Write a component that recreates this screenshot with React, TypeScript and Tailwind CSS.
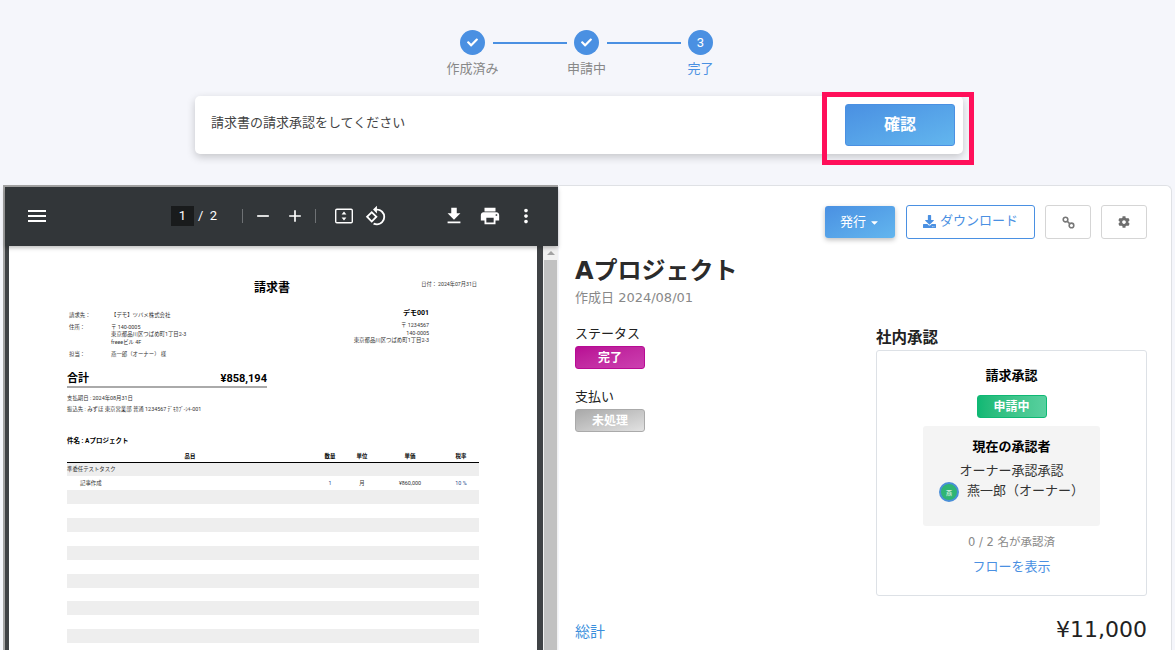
import { FaCheck, FaDownload, FaCog, FaCaretDown } from "react-icons/fa";
import { MdMenu, MdRemove, MdAdd, MdFileDownload, MdPrint, MdMoreVert, MdRotate90DegreesCcw } from "react-icons/md";

const rows = [0, 1, 2, 3, 4, 5, 6, 7, 8, 9, 10, 11, 12];

function StepCircle({ done, n }: { done?: boolean; n?: number }) {
  return (
    <div className="w-[25px] h-[25px] rounded-full bg-[#4a90e2] flex items-center justify-center text-white text-[13px] font-['Roboto',sans-serif] shrink-0">
      {done ? <FaCheck className="w-[11px] h-[11px]" /> : n}
    </div>
  );
}

function FitIcon() {
  return (
    <svg viewBox="0 0 20 20" className="w-5 h-5" fill="none">
      <rect x="1.7" y="3.2" width="16.6" height="13.6" rx="1.2" stroke="#fff" strokeWidth="1.4" />
      <path d="M10 5.6l2.4 3h-4.8zM10 14.4l-2.4-3h4.8z" fill="#fff" />
    </svg>
  );
}

function LinkIcon() {
  return (
    <svg viewBox="0 0 14 14" className="w-[13px] h-[13px]" fill="none" stroke="#777" strokeWidth="1.7">
      <circle cx="3.8" cy="3.8" r="2.5" />
      <circle cx="10.2" cy="10.2" r="2.5" />
      <path d="M5.8 5.8l2.4 2.4" />
    </svg>
  );
}

function Badge({ label, cls }: { label: string; cls: string }) {
  return (
    <div className={`w-[70px] h-[23px] rounded-[3px] border flex items-center justify-center text-white text-[12px] font-bold ${cls}`}>
      {label}
    </div>
  );
}

function PdfPage() {
  return (
    <div className="w-[528px] bg-white h-[420px] pl-[58px] text-[#333] overflow-hidden">
      <div className="h-[30px] flex w-[410px]">
        <div className="ml-[187px] mt-[33px] text-[12px] leading-[18px] font-bold text-black">請求書</div>
        <div className="ml-auto mt-[34px] text-[5.2px] leading-[8px]">日付： 2024年07月31日</div>
      </div>
      <div className="flex mt-[36px] pl-[2px] w-[362px] text-[5.4px] leading-[7.5px]">
        <div>
          <div className="flex">
            <div className="w-[42px]">請求先：</div>
            <div>【デモ】ツバメ株式会社</div>
          </div>
          <div className="flex mt-[4px]">
            <div className="w-[42px]">住所：</div>
            <div>
              <div>〒 140-0005</div>
              <div>東京都品川区つばめ町1丁目2-3</div>
              <div>freeeビル 4F</div>
            </div>
          </div>
          <div className="flex mt-[5px]">
            <div className="w-[42px]">担当：</div>
            <div>燕一郎（オーナー） 様</div>
          </div>
        </div>
        <div className="ml-auto text-right -mt-[4px]">
          <div className="text-[7px] leading-[10px] font-bold text-black mb-[4px]">デモ001</div>
          <div>〒 1234567</div>
          <div>140-0005</div>
          <div>東京都品川区つばめ町1丁目2-3</div>
        </div>
      </div>
      <div className="w-[200px] mt-[13px] flex justify-between items-end text-[11px] leading-[14px] font-bold text-black border-b-2 border-[#aaa]">
        <span>合計</span>
        <span>¥858,194</span>
      </div>
      <div className="text-[5.4px] leading-[8px] mt-[6px]">支払期日 : 2024年08月31日</div>
      <div className="text-[5.4px] leading-[8px] mt-[3px]">振込先 : みずほ 東京営業部 普通 1234567 ﾃﾞﾓｶﾌﾞ-ｼｷ-001</div>
      <div className="text-[6.5px] leading-[10px] font-bold text-black mt-[23px]">件名 : Aプロジェクト</div>
      <div className="w-[412px] mt-[5px] text-[5.4px]">
        <div className="grid grid-cols-[246px_34px_30px_66px_36px] h-[12px] items-center text-center font-bold border-b border-black text-black">
          <div>品目</div>
          <div>数量</div>
          <div>単位</div>
          <div>単価</div>
          <div>税率</div>
        </div>
        <div className="h-[13.9px] bg-[#eee] flex items-center">準委任テストタスク</div>
        <div className="h-[13.9px] grid grid-cols-[246px_34px_30px_66px_36px] items-center text-center">
          <div className="text-left pl-[13px]">記事作成</div>
          <div className="text-[#2a4a8a]">1</div>
          <div>月</div>
          <div>¥860,000</div>
          <div className="text-[#2a4a8a]">10 %</div>
        </div>
        {rows.map((r) => (
          <div key={r} className={r % 2 === 0 ? "h-[13.9px] bg-[#eee]" : "h-[13.9px]"} />
        ))}
      </div>
    </div>
  );
}

function PdfViewer() {
  return (
    <div className="w-[555px] shrink-0 border-l-2 border-t-2 border-[#a3a3a3] bg-[#3f4245] font-['Roboto','Noto_Sans_CJK_JP',sans-serif]">
      <div className="relative z-10 h-[59px] bg-[#323639] flex items-center pb-[2px] text-white shadow-[0_2px_4px_rgba(0,0,0,0.25)]">
        <MdMenu className="w-6 h-6 ml-[20px]" />
        <div className="w-[23px] h-5 bg-[#191b1c] ml-[122px] flex items-center justify-center text-[13px]">1</div>
        <div className="text-[13px] ml-[4px] w-[44px] whitespace-pre">/  2</div>
        <div className="w-px h-[14px] bg-[#6e7174]" />
        <MdRemove className="w-[20px] h-[20px] ml-[10px]" />
        <MdAdd className="w-[20px] h-[20px] ml-[12px]" />
        <div className="w-px h-[14px] bg-[#6e7174] ml-[10px]" />
        <div className="ml-[18px]"><FitIcon /></div>
        <MdRotate90DegreesCcw className="w-[22px] h-[22px] ml-[11px]" />
        <MdFileDownload className="w-[22px] h-[22px] ml-[56px]" />
        <MdPrint className="w-[22px] h-[22px] ml-[14px]" />
        <MdMoreVert className="w-[22px] h-[22px] ml-[14px]" />
      </div>
      <div className="flex pl-[4px]">
        <PdfPage />
        <div className="w-[6px]" />
        <div className="w-[15px] bg-[#f1f1f1] pl-[1px] pr-[1px]">
          <div className="h-[14px] flex items-center justify-center">
            <div className="w-0 h-0 border-l-[4px] border-r-[4px] border-b-[4px] border-l-transparent border-r-transparent border-b-[#a3a3a3]" />
          </div>
          <div className="h-[400px] bg-[#c1c1c1]" />
        </div>
      </div>
    </div>
  );
}

function DetailPanel() {
  return (
    <div className="flex-1 ml-px mr-[3px] bg-white border-t border-r border-[#dfe1e5] rounded-tr-[6px] pt-[19px] pl-[16px] pr-[24px]">
      <div className="flex justify-end items-start gap-[10px]">
        <button className="w-[70px] h-[32px] mt-[1px] mr-px rounded-[3px] bg-linear-to-br from-[#4a90e2] to-[#63b6ee] text-white text-[13px] flex items-center justify-center gap-[3px] shadow-[0_2px_5px_rgba(0,0,0,0.25)]">
          発行 <FaCaretDown className="w-[11px] h-[11px]" />
        </button>
        <button className="w-[129px] h-[34px] rounded-[3px] border border-[#4a90e2] text-[#4a90e2] text-[13px] flex items-center justify-center gap-[4px] pb-[2px]">
          <FaDownload className="w-[13px] h-[13px]" /> ダウンロード
        </button>
        <button className="w-[46px] h-[34px] rounded-[3px] border border-[#d5d5d5] flex items-center justify-center">
          <LinkIcon />
        </button>
        <button className="w-[46px] h-[34px] rounded-[3px] border border-[#d5d5d5] flex items-center justify-center text-[#6e6e6e]">
          <FaCog className="w-[12px] h-[12px]" />
        </button>
      </div>
      <h1 className="text-[24px] leading-[36px] font-bold text-[#2b2b2b] mt-[14px]">Aプロジェクト</h1>
      <div className="text-[13px] leading-[20px] text-[#888] -mt-[1px]">作成日 2024/08/01</div>
      <div className="flex mt-[16px]">
        <div className="w-[301px]">
          <div className="text-[13px] leading-[20px] text-[#222] mb-[2px]">ステータス</div>
          <Badge label="完了" cls="from-[#b80b94] to-[#cc3fb0] bg-linear-to-br border-[#b80b94]" />
          <div className="text-[13px] leading-[20px] text-[#222] mt-[18px] mb-[2px]">支払い</div>
          <Badge label="未処理" cls="from-[#a9a9a9] to-[#e2e2e2] bg-linear-to-br border-[#aaa]" />
        </div>
        <div className="w-[271px]">
          <div className="text-[15.5px] leading-[20px] font-bold text-[#222] mt-[4px] mb-[2px]">社内承認</div>
          <div className="h-[246px] border border-[#dde1e6] rounded-[3px] flex flex-col items-center pt-[15px]">
            <div className="text-[13px] leading-[20px] font-bold text-black">請求承認</div>
            <div className="mt-[9px]">
              <Badge label="申請中" cls="from-[#0fb874] to-[#58d09f] bg-linear-to-r border-[#0fb874]" />
            </div>
            <div className="w-[177px] h-[100px] mt-[8px] bg-[#f4f4f4] rounded-[3px] flex flex-col items-center pt-[11px] text-[13px]">
              <div className="leading-[20px] font-bold text-black">現在の承認者</div>
              <div className="leading-[20px] text-[#333] mt-[4px]">オーナー承認承認</div>
              <div className="flex items-center gap-[8px] text-[#333] self-start ml-[16px] mt-[1px]">
                <div className="w-5 h-5 rounded-full bg-[#2fb574] border-2 border-[#4a8fd8] flex items-center justify-center text-white text-[6px] shrink-0">燕</div>
                <span className="leading-[20px] -mt-[3px]">燕一郎（オーナー）</span>
              </div>
            </div>
            <div className="text-[11.5px] leading-[18px] text-[#888] mt-[7px]">0 / 2 名が承認済</div>
            <div className="text-[13px] leading-[20px] text-[#4a90e2] mt-[6px]">フローを表示</div>
          </div>
        </div>
      </div>
      <div className="flex justify-between items-center mt-[19px]">
        <span className="text-[15px] mt-[4px] text-[#3b8fdc]">総計</span>
        <span className="text-[22px] leading-[30px] text-[#222]">¥11,000</span>
      </div>
    </div>
  );
}

export default function App() {
  return (
    <div className="h-screen overflow-hidden bg-[#f5f6fb] pt-[30px] font-['DejaVu_Sans','Noto_Sans_CJK_JP',sans-serif]">
      {/* Stepper */}
      <div className="flex justify-center items-center pr-[2px]">
        <StepCircle done />
        <div className="w-[74px] h-[2px] bg-[#4a90e2] mx-[7.5px]" />
        <StepCircle done />
        <div className="w-[74px] h-[2px] bg-[#4a90e2] mx-[7.5px]" />
        <StepCircle n={3} />
      </div>
      <div className="grid grid-cols-[114px_114px_114px] justify-center pr-[2px] text-center text-[13px] leading-[20px] text-[#888] mt-[4px]">
        <div>作成済み</div>
        <div>申請中</div>
        <div className="text-[#4a90e2]">完了</div>
      </div>

      {/* Request card */}
      <div className="relative w-[768px] h-[58px] ml-[195px] mt-[17px] bg-white rounded-[5px] shadow-[0_3px_8px_rgba(0,0,0,0.2)] flex items-center justify-between pl-4 pr-2 text-[13px] text-[#444]">
        <span className="-mt-[4px]">請求書の請求承認をしてください</span>
        <button className="w-[110px] h-[42px] rounded-[3px] border border-[#4a90e2] bg-linear-to-br from-[#4a90e2] to-[#63b6ee] text-white text-[16px] font-bold">確認</button>
        <div className="absolute left-[627px] top-[-4px] w-[152px] h-[73px] border-[5px] border-[#ff0f5a]" />
      </div>

      {/* Viewer + details */}
      <div className="flex pl-[3px] mt-[31px]">
        <PdfViewer />
        <DetailPanel />
      </div>
    </div>
  );
}
